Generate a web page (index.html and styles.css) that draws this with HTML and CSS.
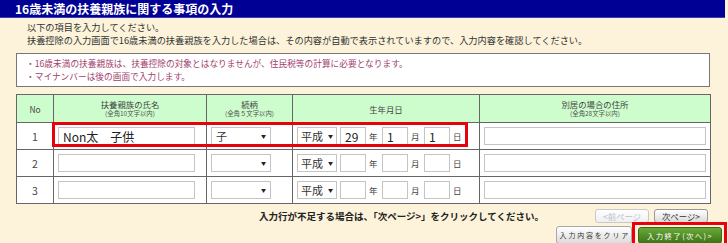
FILE: index.html
```html
<!DOCTYPE html>
<html lang="ja">
<head>
    <meta charset="UTF-8">
    <meta name="viewport" content="width=device-width, initial-scale=1.0">
    <title>16歳未満の扶養親族に関する事項の入力</title>
    <link rel="stylesheet" href="styles.css">
</head>
<body>
    <div class="page">
        <h1 class="title">16歳未満の扶養親族に関する事項の入力</h1>
        <div class="intro">
            <p>以下の項目を入力してください。</p>
            <p>扶養控除の入力画面で16歳未満の扶養親族を入力した場合は、その内容が自動で表示されていますので、入力内容を確認してください。</p>
        </div>
        <div class="note">
            <p>・16歳未満の扶養親族は、扶養控除の対象とはなりませんが、住民税等の計算に必要となります。</p>
            <p>・マイナンバーは後の画面で入力します。</p>
        </div>

        <div class="grid-wrap">
            <table class="grid">
                <colgroup>
                    <col class="c-no">
                    <col class="c-name">
                    <col class="c-rel">
                    <col class="c-birth">
                    <col class="c-addr">
                </colgroup>
                <thead>
                    <tr>
                        <th>No</th>
                        <th>扶養親族の氏名<span class="sub">(全角10文字以内)</span></th>
                        <th>続柄<span class="sub">(全角５文字以内)</span></th>
                        <th>生年月日</th>
                        <th>別居の場合の住所<span class="sub">(全角28文字以内)</span></th>
                    </tr>
                </thead>
                <tbody>
                    <tr>
                        <td class="no">1</td>
                        <td><input class="field name" type="text" value="Non太　子供"></td>
                        <td><span class="pick rel">子</span></td>
                        <td>
                            <div class="birth">
                                <span class="pick era">平成</span>
                                <input class="field num" type="text" value="29"><span class="unit">年</span>
                                <input class="field num" type="text" value="1"><span class="unit">月</span>
                                <input class="field num" type="text" value="1"><span class="unit">日</span>
                            </div>
                        </td>
                        <td><input class="field addr" type="text"></td>
                    </tr>
                    <tr>
                        <td class="no">2</td>
                        <td><input class="field name" type="text"></td>
                        <td><span class="pick rel"></span></td>
                        <td>
                            <div class="birth">
                                <span class="pick era">平成</span>
                                <input class="field num" type="text"><span class="unit">年</span>
                                <input class="field num" type="text"><span class="unit">月</span>
                                <input class="field num" type="text"><span class="unit">日</span>
                            </div>
                        </td>
                        <td><input class="field addr" type="text"></td>
                    </tr>
                    <tr>
                        <td class="no">3</td>
                        <td><input class="field name" type="text"></td>
                        <td><span class="pick rel"></span></td>
                        <td>
                            <div class="birth">
                                <span class="pick era">平成</span>
                                <input class="field num" type="text"><span class="unit">年</span>
                                <input class="field num" type="text"><span class="unit">月</span>
                                <input class="field num" type="text"><span class="unit">日</span>
                            </div>
                        </td>
                        <td><input class="field addr" type="text"></td>
                    </tr>
                </tbody>
            </table>
            <div class="highlight row-mark"></div>
        </div>

        <div class="pager">
            <span class="hint">入力行が不足する場合は、「次ページ&gt;」をクリックしてください。</span>
            <span class="btn small disabled">&lt;前ページ</span>
            <span class="btn small">次ページ&gt;</span>
        </div>
        <div class="actions">
            <span class="btn clear">入力内容をクリア</span>
            <div class="done-wrap">
                <span class="btn done">入力終了(次へ)&gt;</span>
                <div class="highlight done-mark"></div>
            </div>
        </div>
    </div>
</body>
</html>
```

FILE: styles.css
```css
body {
    margin: 0;
    background-color: #fcf3da;
    font-family: "Noto Sans CJK JP", "Noto Sans", sans-serif;
    color: #333;
}
p {
    margin: 0;
}
.page {
    width: 728px;
    height: 243px;
    overflow: hidden;
}
.title {
    width: 725px;
    height: 18px;
    margin: 0;
    padding-left: 15px;
    background-color: #000094;
    border-bottom: 1px solid #3b3bb0;
    box-sizing: border-box;
    color: #fff;
    font-size: 12px;
    font-weight: bold;
    line-height: 17px;
}
.intro {
    padding: 3px 0 0 27px;
    font-size: 9.2px;
    line-height: 13px;
}
.note {
    width: 694px;
    height: 34px;
    margin: 6px 0 0 16px;
    padding: 4px 9px;
    box-sizing: border-box;
    background-color: #fff;
    border: 1px solid #777;
    color: #a3416f;
    font-size: 8.7px;
    line-height: 12.5px;
}
.grid-wrap {
    position: relative;
    width: 694px;
    margin: 7px 0 0 16px;
}
.grid {
    width: 694px;
    border-collapse: collapse;
    table-layout: fixed;
    background-color: #fff;
}
.c-no { width: 37px; }
.c-name { width: 153px; }
.c-rel { width: 86px; }
.c-birth { width: 187px; }
.c-addr { width: 231px; }
.grid th, .grid td {
    border: 1px solid #666;
    padding: 0;
}
.grid th {
    height: 27px;
    background-color: #cdfdcd;
    font-weight: normal;
    font-size: 8.4px;
    line-height: 10px;
    color: #444;
}
.grid th .sub {
    display: block;
    font-size: 6.4px;
    line-height: 9px;
    color: #555;
}
.grid td {
    height: 26px;
    padding-left: 4px;
}
.grid td.no {
    padding: 0;
    text-align: center;
    font-size: 10.5px;
    color: #444;
}
.field {
    display: block;
    height: 18px;
    margin: 0;
    padding: 0 4px;
    box-sizing: border-box;
    border: 1px solid #c4c4c4;
    background-color: #fff;
    font-family: inherit;
    font-size: 12px;
    color: #222;
    outline: none;
}
.field.name { width: 137px; }
.field.addr { width: 222px; }
.field.num {
    width: 26px;
    font-size: 12px;
    padding: 0 4px;
}
.pick {
    position: relative;
    display: block;
    height: 18px;
    box-sizing: border-box;
    border: 1px solid #c4c4c4;
    background-color: #fff;
    padding-left: 4px;
    font-size: 11px;
    line-height: 16px;
    color: #333;
}
.pick::after {
    content: "▼";
    position: absolute;
    right: 4px;
    top: 0;
    font-size: 5px;
    color: #222;
}
.pick.rel {
    width: 60px;
}
.pick.era {
    width: 40px;
    padding-left: 3px;
}
.pick.era::after {
    right: 3px;
}
.birth {
    display: flex;
    align-items: center;
}
.birth .field.num {
    margin-left: 3px;
}
.unit {
    width: 13px;
    padding-left: 3px;
    box-sizing: border-box;
    font-size: 8.5px;
    color: #444;
}
.highlight {
    position: absolute;
    border: 3px solid #e8000b;
    box-sizing: border-box;
}
.row-mark {
    left: 36px;
    top: 28px;
    width: 416px;
    height: 25px;
}
.pager {
    display: flex;
    justify-content: flex-end;
    align-items: center;
    gap: 5px;
    margin-top: 4px;
    padding-right: 20px;
    height: 15px;
}
.hint {
    margin-right: 46px;
    font-size: 9.5px;
    font-weight: bold;
    color: #222;
}
.btn {
    display: block;
    flex: none;
    box-sizing: border-box;
    border: 1px solid #999;
    border-radius: 3px;
    background: linear-gradient(#ffffff, #dcdcdc);
    color: #333;
    text-align: center;
    white-space: nowrap;
    cursor: pointer;
}
.btn.small {
    width: 54px;
    height: 14px;
    font-size: 8.4px;
    line-height: 12px;
}
.btn.disabled {
    color: #b8c0d0;
    border-color: #c8c8c8;
    background: linear-gradient(#fff, #f0f0f0);
}
.actions {
    display: flex;
    justify-content: flex-end;
    align-items: center;
    gap: 6px;
    margin-top: 3px;
    padding-right: 6px;
}
.btn.clear {
    height: 18px;
    padding: 0 1px 0 3px;
    font-size: 7px;
    line-height: 16px;
    letter-spacing: 1.8px;
    border-color: #a8a8a8;
}
.done-wrap {
    position: relative;
}
.btn.done {
    width: 84px;
    height: 17px;
    font-size: 7.4px;
    line-height: 15px;
    letter-spacing: 1.4px;
    color: #fff;
    border-color: #3b6a12;
    background: linear-gradient(#69a83a, #3d7514);
}
.done-mark {
    left: -6px;
    top: -5px;
    width: 95px;
    height: 28px;
}
```
